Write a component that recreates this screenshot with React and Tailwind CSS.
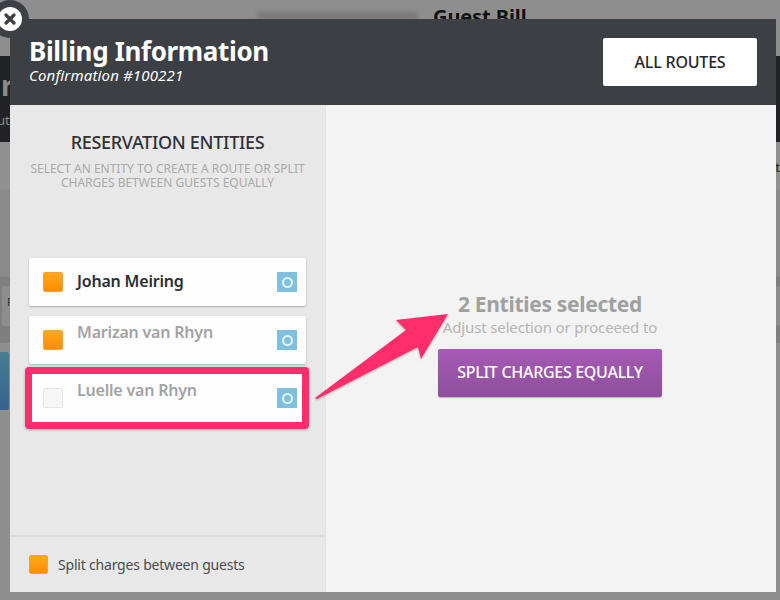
const font = { fontFamily: '"Noto Sans", sans-serif' };

const entities = [
  { name: "Johan Meiring", checked: true, active: true },
  { name: "Marizan van Rhyn", checked: true },
  { name: "Luelle van Rhyn", checked: false },
];

function Check({ checked, small }) {
  const size = small ? "w-[19px] h-[19px]" : "w-5 h-5";
  if (!checked) {
    return <span className={`${size} shrink-0 rounded-[2px] bg-[#f6f6f6] border border-[#e6e6e6]`} />;
  }
  return <span className={`${size} shrink-0 rounded-[2px] bg-gradient-to-b from-[#ffa91c] to-[#ff8c00] border border-[#f3a23a]`} />;
}

function EntityCard({ entity }) {
  return (
    <div className="h-12 bg-[#fdfdfd] rounded-[2px] shadow-[0_1px_2px_rgba(0,0,0,0.25)] pl-[14px] pr-[9px] flex items-center">
      <Check checked={entity.checked} />
      <span
        className={`ml-[14px] flex-1 text-[16px] font-semibold tracking-[-0.2px] leading-5 ${
          entity.active ? "text-[#2b2d30] mb-[2px]" : "text-[#a3a3a3] self-start mt-[6px]"
        }`}
      >
        {entity.name}
      </span>
      <span className="w-5 h-5 bg-[#7fc0de] flex items-center justify-center">
        <span className="w-[11px] h-[11px] rounded-full border-2 border-[#e6f3f9]" />
      </span>
    </div>
  );
}

export default function App() {
  return (
    <div style={font} className="relative w-[780px] h-[600px] overflow-hidden bg-[#8e8e8e]">
      {/* page behind the overlay */}
      <div className="h-14 flex items-start pl-[258px] gap-[15px]">
        <span className="mt-[12px] w-[160px] h-[8px] bg-[#7a7a7a] blur-[2px]" />
        <span className="mt-[5px] text-[20px] leading-6 font-bold text-[#111] tracking-[-0.1px]">Guest Bill</span>
      </div>
      <div className="h-[86px] bg-[#212226] flex flex-col text-[#8b8b8b]">
        <span className="pl-[1px] mt-[13px] text-[28px] font-bold leading-8">r</span>
        <span className="mt-[11px] ml-[-3px] text-[13px] leading-4">ut</span>
      </div>
      <div className="h-[48px] bg-[#909090] flex justify-end">
        <span className="mt-[17px] text-[13px] leading-4 text-[#222]">t</span>
      </div>
      <div className="h-[87px] bg-[#8a8a8a]" />
      <div className="h-[66px] bg-[#7f7f7f] pt-[9px] pl-[2px]">
        <div className="h-[40px] rounded-[2px] bg-[#8d8d8d] pl-[5px] pt-[8px] text-[11px] leading-4 text-[#333]">F</div>
      </div>
      <div className="mt-[9px] w-[9px] h-[58px] bg-gradient-to-b from-[#467f90] to-[#36628f] rounded-r-[2px]" />

      {/* close button */}
      <div className="absolute left-[-9px] top-0 z-20 w-[38px] h-[38px] rounded-full bg-[#3c3f44] flex items-center justify-center">
        <span className="w-6 h-6 rounded-full bg-white flex items-center justify-center">
          <svg width="12" height="12" viewBox="0 0 12 12">
            <path d="M2 2L10 10M10 2L2 10" stroke="#3c3f44" strokeWidth="3.2" strokeLinecap="round" />
          </svg>
        </span>
      </div>

      {/* modal */}
      <div className="absolute left-[10px] top-[19px] w-[766px] h-[573px] flex flex-col z-10">
        <div className="h-[86px] shrink-0 bg-[#3c3f44] flex items-center justify-between pl-[19px] pr-[19px]">
          <div className="text-white pb-[4px]">
            <div className="text-[26px] font-bold leading-[29px] tracking-[-0.35px]">Billing Information</div>
            <div className="text-[15px] italic leading-[18px] tracking-[0.15px]">Confirmation #100221</div>
          </div>
          <button className="w-[154px] h-[48px] bg-white rounded-[2px] text-[#23262b] text-[16px] font-medium tracking-[-0.2px]">
            ALL ROUTES
          </button>
        </div>

        <div className="flex-1 flex min-h-0">
          <div className="w-[316px] shrink-0 bg-[#e8e8e8] border-r border-[#e2e2e2] flex flex-col">
            <div className="flex-1 px-[19px]">
              <h2 className="mt-[25px] text-center text-[18px] font-medium leading-6 tracking-[-0.3px] text-[#303236]">
                RESERVATION ENTITIES
              </h2>
              <p className="mt-[8px] text-center text-[12px] leading-[14px] text-[#a9a9a9]">
                SELECT AN ENTITY TO CREATE A ROUTE OR SPLIT
                <br />
                CHARGES BETWEEN GUESTS EQUALLY
              </p>
              <div className="mt-[68px] flex flex-col gap-[10px] w-[277px]">
                <EntityCard entity={entities[0]} />
                <EntityCard entity={entities[1]} />
                <div className="relative">
                  <EntityCard entity={entities[2]} />
                  <div className="absolute left-[-4px] right-[-3px] top-[-7px] bottom-[-7px] rounded-[4px] border-[7px] border-[#ff2d6b] shadow-[0_1px_3px_rgba(0,0,0,0.25)]" />
                </div>
              </div>
            </div>
            <div className="h-[57px] border-t-2 border-[#dcdcdc] pl-[19px] flex items-center gap-[10px]">
              <Check checked small />
              <span className="text-[14px] tracking-[-0.2px] text-[#4a4c50]">Split charges between guests</span>
            </div>
          </div>

          <div className="flex-1 bg-[#f3f3f3] flex flex-col items-center pt-[186px] pr-[2px]">
            <div className="text-[21px] font-bold leading-[26px] tracking-[-0.3px] text-[#a0a0a0]">2 Entities selected</div>
            <div className="text-[15px] leading-[20px] tracking-[-0.14px] text-[#b5b5b5]">Adjust selection or proceeed to</div>
            <button className="mt-[12px] w-[224px] h-[48px] pb-[2px] rounded-[2px] bg-gradient-to-b from-[#a65ab4] to-[#8e4f9d] text-white text-[16px] font-medium tracking-[-0.3px] shadow-[0_1px_1px_rgba(0,0,0,0.25)]">
              SPLIT CHARGES EQUALLY
            </button>
          </div>
        </div>
      </div>

      {/* annotation arrow */}
      <svg className="absolute left-0 top-0 z-30 pointer-events-none" width="780" height="600" viewBox="0 0 780 600">
        <polygon
          points="315,398 406,330 396,320 448,314 421,359 418,347 317,399"
          fill="#ff2d6b"
          style={{ filter: "drop-shadow(0 1px 1px rgba(0,0,0,0.3))" }}
        />
      </svg>
    </div>
  );
}
